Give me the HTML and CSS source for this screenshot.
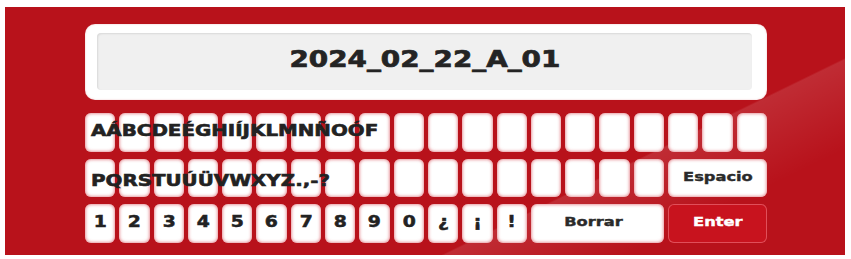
FILE: index.html
```html
<!DOCTYPE html>
<html lang="es">
<head>
<meta charset="utf-8">
<title>Teclado</title>
<link rel="stylesheet" href="styles.css">
</head>
<body>
<div class="page">
  <div class="panel">
    <div class="display">
      <div class="screen"><span class="screen-text">2024_02_22_A_01</span></div>
    </div>
    <div class="keyboard">
      <div class="row">
        <div class="keys">
          <span class="key"></span><span class="key"></span><span class="key"></span><span class="key"></span><span class="key"></span>
          <span class="key"></span><span class="key"></span><span class="key"></span><span class="key"></span><span class="key"></span>
          <span class="key"></span><span class="key"></span><span class="key"></span><span class="key"></span><span class="key"></span>
          <span class="key"></span><span class="key"></span><span class="key"></span><span class="key"></span><span class="key"></span>
        </div>
        <div class="label label-1"><span>AÁBCDEÉGHIÍJKLMNÑOÓF</span></div>
      </div>
      <div class="row">
        <div class="keys">
          <span class="key"></span><span class="key"></span><span class="key"></span><span class="key"></span><span class="key"></span>
          <span class="key"></span><span class="key"></span><span class="key"></span><span class="key"></span><span class="key"></span>
          <span class="key"></span><span class="key"></span><span class="key"></span><span class="key"></span><span class="key"></span>
          <span class="key"></span><span class="key"></span>
          <span class="key wide3 small"><span>Espacio</span></span>
        </div>
        <div class="label label-2"><span>PQRSTUÚÜVWXYZ.,-?</span></div>
      </div>
      <div class="row">
        <div class="keys">
          <span class="key"><span>1</span></span><span class="key"><span>2</span></span><span class="key"><span>3</span></span>
          <span class="key"><span>4</span></span><span class="key"><span>5</span></span><span class="key"><span>6</span></span>
          <span class="key"><span>7</span></span><span class="key"><span>8</span></span><span class="key"><span>9</span></span>
          <span class="key"><span>0</span></span><span class="key"><span>¿</span></span><span class="key"><span>¡</span></span>
          <span class="key"><span>!</span></span>
          <span class="key wide4 small borrar"><span>Borrar</span></span>
          <span class="key wide3 small enter"><span>Enter</span></span>
        </div>
      </div>
    </div>
  </div>
</div>
</body>
</html>
```
FILE: styles.css
```css
html, body {
  margin: 0;
  background: #ffffff;
  font-family: "DejaVu Sans", "Liberation Sans", sans-serif;
}

.page {
  padding: 7px 0 0 5px;
}

.panel {
  width: 840px;
  height: 248px;
  box-sizing: border-box;
  padding: 17px 0 0 80px;
  background-color: #b8121b;
  background-image: linear-gradient(154deg,
    rgba(255, 255, 255, 0) 70%,
    rgba(255, 255, 255, 0.11) 70.3%,
    rgba(255, 255, 255, 0) 84%);
}

.display {
  width: 682px;
  height: 76px;
  box-sizing: border-box;
  background: #ffffff;
  border-radius: 10px;
  box-shadow: inset 0 0 2px rgba(200, 60, 70, 0.35);
  padding: 9px 15px 10px 12px;
}

.screen {
  height: 100%;
  box-sizing: border-box;
  background: #f0f0f0;
  border-radius: 4px;
  box-shadow: inset 1px 1px 2px rgba(0, 0, 0, 0.1);
  display: flex;
  align-items: center;
  justify-content: center;
  padding-bottom: 6px;
}

.screen-text {
  display: inline-block;
  font-weight: bold;
  font-size: 23px;
  color: #242424;
  -webkit-text-stroke: 0.7px #242424;
  transform: scaleX(1.21);
}

.keyboard {
  margin-top: 13px;
  width: 682px;
  display: flex;
  flex-direction: column;
  gap: 7px;
}

.row {
  display: grid;
  height: 38.5px;
}

.row > * {
  grid-area: 1 / 1;
}

.keys {
  display: grid;
  grid-template-columns: repeat(20, 1fr);
  column-gap: 4px;
}

.key {
  background: #ffffff;
  border-radius: 6px;
  box-shadow: inset 0 0 3px 1px rgba(214, 70, 80, 0.55);
  display: flex;
  align-items: center;
  justify-content: center;
  font-weight: bold;
  font-size: 15px;
  color: #222222;
  -webkit-text-stroke: 0.5px #222222;
  padding-bottom: 3px;
  box-sizing: border-box;
}

.key > span {
  display: inline-block;
  transform: scaleX(1.25);
}

.key.small {
  font-size: 13px;
  -webkit-text-stroke: 0.4px #2a2a2a;
  color: #2a2a2a;
}

.key.borrar {
  padding-right: 8px;
}

.wide3 {
  grid-column: span 3;
}

.wide4 {
  grid-column: span 4;
}

.key.enter {
  background: #c8131e;
  color: #ffffff;
  -webkit-text-stroke: 0.4px #ffffff;
  box-shadow: inset 0 0 0 1px rgba(240, 120, 130, 0.6);
}

.label {
  z-index: 1;
  align-self: center;
  padding-left: 6px;
  white-space: nowrap;
  pointer-events: none;
}

.label-1 {
  padding-bottom: 3px;
}

.label-2 {
  padding-top: 5px;
}

.label > span {
  display: inline-block;
  transform-origin: left center;
  transform: scaleX(1.24);
  font-weight: bold;
  font-size: 16px;
  color: #222222;
  -webkit-text-stroke: 0.6px #222222;
}
```
